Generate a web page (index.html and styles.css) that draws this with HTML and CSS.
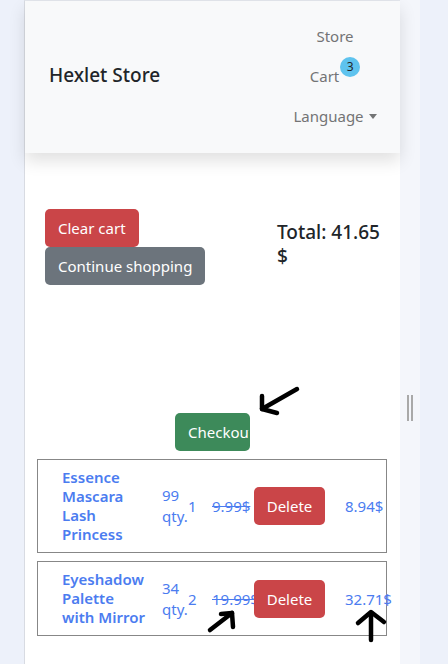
FILE: index.html
```html
<!DOCTYPE html>
<html lang="en">
<head>
<meta charset="utf-8">
<title>Hexlet Store</title>
<link rel="stylesheet" href="styles.css">
</head>
<body>
<div class="frame">
  <div class="app">
    <nav class="navbar">
      <a class="brand" href="#">Hexlet Store</a>
      <ul class="nav">
        <li><a class="nav-link" href="#">Store</a></li>
        <li><a class="nav-link" href="#">Cart<span class="badge">3</span></a></li>
        <li><a class="nav-link" href="#">Language<span class="caret"></span></a></li>
      </ul>
    </nav>
    <main class="content">
      <div class="cart-head">
        <div class="actions">
          <button class="btn btn-danger">Clear cart</button>
          <button class="btn btn-secondary">Continue shopping</button>
        </div>
        <h5 class="total">Total: 41.65 $</h5>
      </div>
      <div class="checkout-row">
        <button class="btn btn-success btn-checkout">Checkout</button>
      </div>
      <div class="items">
        <div class="item">
          <a class="name" href="#">Essence Mascara Lash Princess</a>
          <span class="stock">99 qty.</span>
          <span class="count">1</span>
          <span class="price">9.99$</span>
          <button class="btn btn-danger btn-delete">Delete</button>
          <span class="sum">8.94$</span>
        </div>
        <div class="item">
          <a class="name" href="#">Eyeshadow Palette with Mirror</a>
          <span class="stock">34 qty.</span>
          <span class="count">2</span>
          <span class="price">19.99$</span>
          <button class="btn btn-danger btn-delete">Delete</button>
          <span class="sum">32.71$</span>
        </div>
      </div>
    </main>
  </div>
  <div class="strip"><span class="handle"></span></div>
</div>
<svg class="marks" width="448" height="664" viewBox="0 0 448 664" aria-hidden="true">
  <g fill="none" stroke="#000" stroke-width="4.5" stroke-linecap="round" stroke-linejoin="round">
    <path d="M297 389 L262 409"/>
    <path d="M262 396 L262 409 L277 413"/>
    <path d="M210 630 L232 613"/>
    <path d="M221 614 L232 613 L233 627"/>
    <path d="M371 613 L371 640"/>
    <path d="M358 623 L371 612 L384 622"/>
  </g>
</svg>
</body>
</html>
```
FILE: styles.css
```css
* { box-sizing: border-box; }
html, body { margin: 0; padding: 0; }
body {
  background: #edf1fa;
  font-family: "Noto Sans", "Open Sans", sans-serif;
  font-size: 16px;
  color: #212529;
  height: 664px;
  overflow: hidden;
}
.frame {
  display: flex;
  padding-left: 24px;
  height: 664px;
}
.app {
  width: 376px;
  border-left: 1px solid #d8dbe2;
  border-top: 1px solid #e3e6ec;
  background: #fff;
  display: flex;
  flex-direction: column;
}
.strip {
  width: 20px;
  background: #f4f6fb;
  display: flex;
  flex-direction: column;
  align-items: center;
  padding-top: 395px;
}
.handle {
  width: 6px;
  height: 26px;
  border-left: 2px solid #a9a9a9;
  border-right: 2px solid #a9a9a9;
}
.navbar {
  height: 152px;
  background: #f8f9fa;
  display: flex;
  align-items: center;
  padding-left: 24px;
  box-shadow: 0 8px 16px rgba(0,0,0,0.12);
  position: relative;
  z-index: 1;
}
.brand {
  font-size: 19px;
  font-weight: 500;
  color: #212529;
  text-decoration: none;
  margin-top: -4px;
}
.nav {
  list-style: none;
  margin: -3px 10px 0 auto;
  padding: 0;
  width: 110px;
  display: flex;
  flex-direction: column;
  align-items: center;
}
.nav li { height: 40px; line-height: 40px; }
.nav-link {
  color: #737475;
  text-decoration: none;
  font-size: 15px;
}
.badge {
  display: inline-block;
  vertical-align: 11px;
  margin-left: 1px;
  width: 20px;
  height: 20px;
  border-radius: 50%;
  background: #5ec3ee;
  color: #212529;
  font-size: 12px;
  line-height: 20px;
  text-align: center;
}
.caret {
  display: inline-block;
  margin-left: 5px;
  vertical-align: 3px;
  border-top: 5px solid #737475;
  border-left: 4px solid transparent;
  border-right: 4px solid transparent;
}
.content {
  padding: 56px 0 0 20px;
}
.cart-head {
  display: flex;
}
.actions {
  width: 232px;
  display: flex;
  flex-direction: column;
  align-items: flex-start;
}
.btn {
  font-family: inherit;
  font-size: 15px;
  line-height: 24px;
  padding: 6px 12px;
  border: 1px solid transparent;
  border-radius: 5px;
  color: #fff;
  cursor: pointer;
}
.btn-danger { background: #ca4548; }
.btn-secondary { background: #6c747c; }
.btn-success { background: #3d8a5a; }
.total {
  margin: 11px 0 0 0;
  width: 112px;
  font-size: 19px;
  font-weight: 500;
  line-height: 24px;
}
.checkout-row {
  display: flex;
  justify-content: center;
  padding-right: 20px;
  margin-top: 128px;
}
.btn-checkout {
  width: 75px;
  overflow: hidden;
  white-space: nowrap;
  text-align: left;
  padding-right: 0;
}
.items {
  margin: 8px 0 0 -8px;
  width: 350px;
  display: flex;
  flex-direction: column;
  gap: 8px;
}
.item {
  border: 1px solid #878787;
  display: flex;
  align-items: center;
  padding: 8px 0 8px 24px;
  color: #4b7cf0;
  font-size: 15px;
}
.name {
  width: 86px;
  margin-right: 14px;
  flex: none;
  color: #4b7cf0;
  font-weight: 600;
  text-decoration: none;
  line-height: 19px;
}
.stock {
  width: 26px;
  flex: none;
  line-height: 21px;
}
.count {
  width: 24px;
  flex: none;
}
.price {
  width: 42px;
  flex: none;
  white-space: nowrap;
  text-decoration: line-through;
}
.btn-delete {
  width: 71px;
  flex: none;
  padding: 6px 0;
  text-align: center;
}
.sum {
  margin-left: 20px;
  white-space: nowrap;
}
.marks {
  position: absolute;
  left: 0;
  top: 0;
  pointer-events: none;
}
```
